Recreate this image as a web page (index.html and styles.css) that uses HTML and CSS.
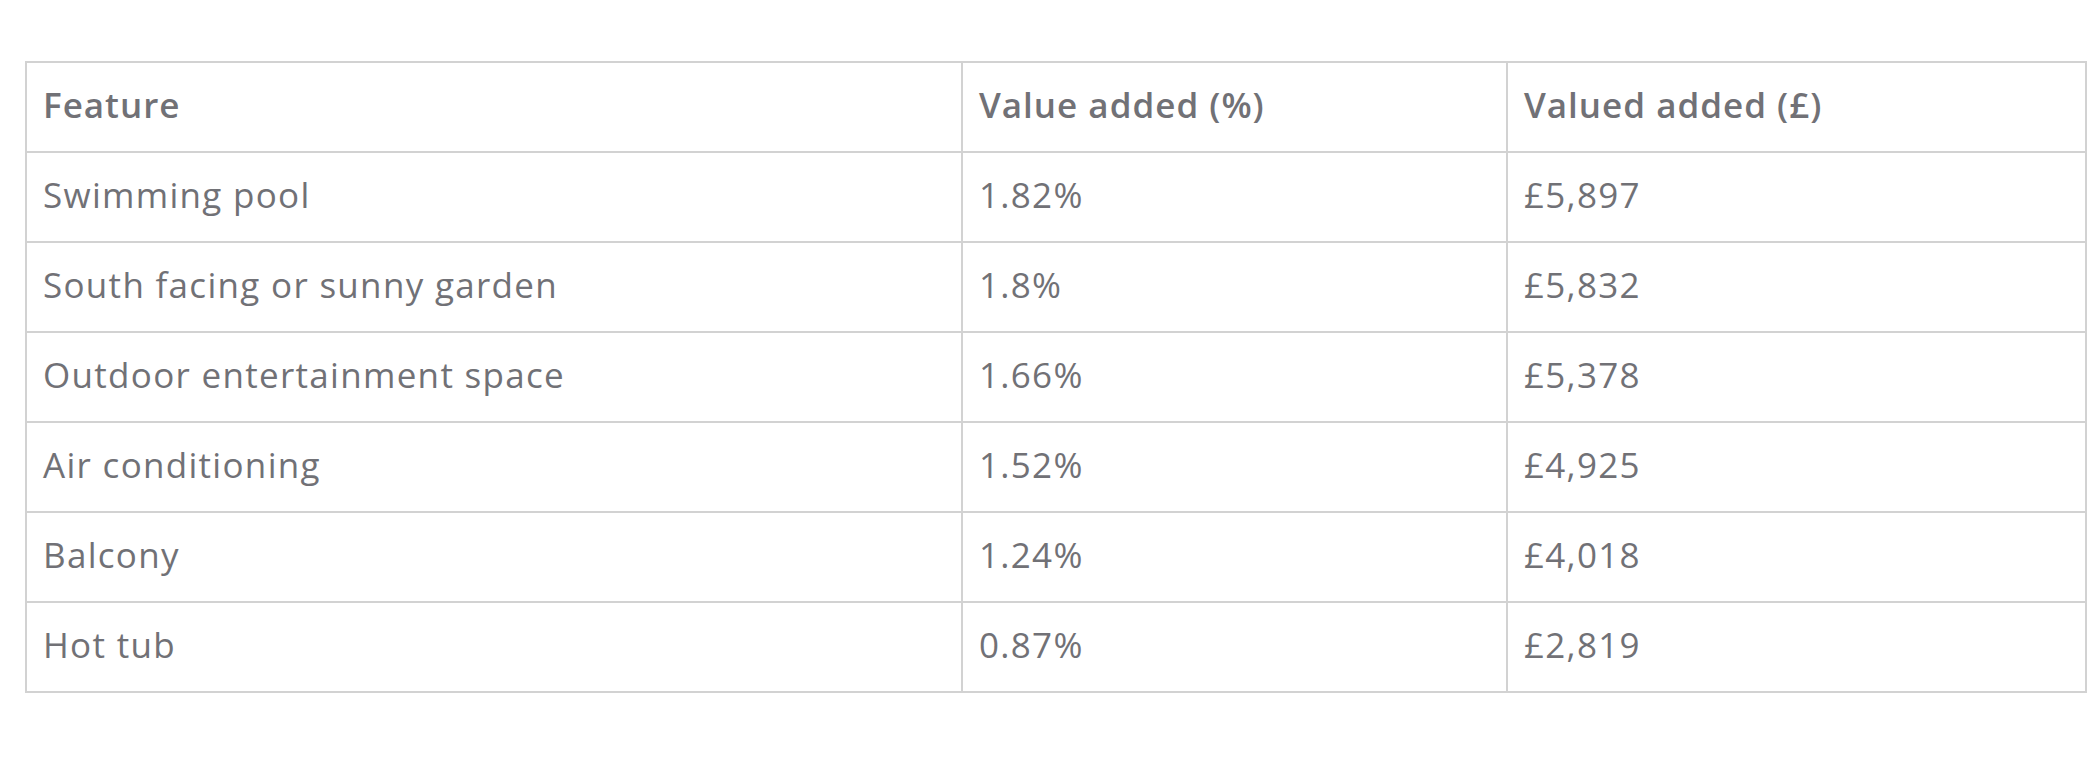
FILE: index.html
```html
<!DOCTYPE html>
<html lang="en">
<head>
<meta charset="utf-8">
<title>Features</title>
<link rel="stylesheet" href="styles.css">
</head>
<body>
<div class="wrap">
<table class="values">
  <colgroup>
    <col class="c1"><col class="c2"><col class="c3">
  </colgroup>
  <thead>
    <tr><th>Feature</th><th>Value added (%)</th><th>Valued added (£)</th></tr>
  </thead>
  <tbody>
    <tr><td>Swimming pool</td><td>1.82%</td><td>£5,897</td></tr>
    <tr><td>South facing or sunny garden</td><td>1.8%</td><td>£5,832</td></tr>
    <tr><td>Outdoor entertainment space</td><td>1.66%</td><td>£5,378</td></tr>
    <tr><td>Air conditioning</td><td>1.52%</td><td>£4,925</td></tr>
    <tr><td>Balcony</td><td>1.24%</td><td>£4,018</td></tr>
    <tr><td>Hot tub</td><td>0.87%</td><td>£2,819</td></tr>
  </tbody>
</table>
</div>
</body>
</html>
```
FILE: styles.css
```css
html, body {
  margin: 0;
  padding: 0;
  background: #ffffff;
}
.wrap {
  padding: 61px 11px 0 25px;
}
.values {
  width: 2060px;
  border-collapse: collapse;
  table-layout: fixed;
  font-family: "Open Sans", "Liberation Sans", sans-serif;
  color: #717176;
}
.c1 { width: 936px; }
.c2 { width: 545px; }
.c3 { width: 579px; }
.values th,
.values td {
  border: 2px solid #d2d2d2;
  height: 84px;
  padding: 0 16px 4px;
  text-align: left;
  vertical-align: middle;
  font-size: 35px;
  line-height: 1.3;
  letter-spacing: 1.3px;
}
.values th {
  font-weight: 600;
  letter-spacing: 1px;
}
.values td {
  font-weight: 400;
}
```
